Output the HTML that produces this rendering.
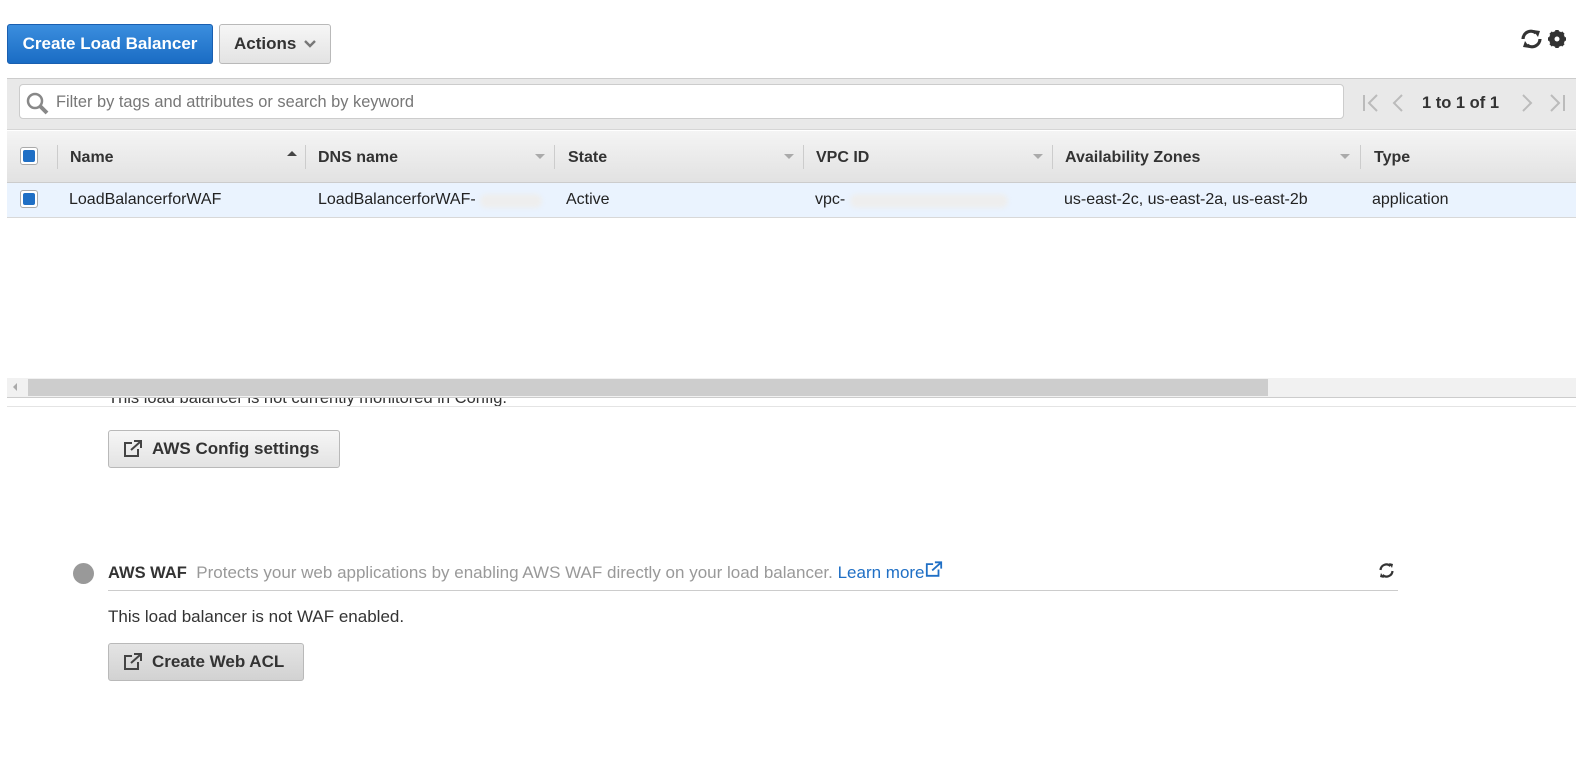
<!DOCTYPE html>
<html><head><style>
*{box-sizing:border-box;margin:0;padding:0}
body{width:1576px;height:764px;background:#fff;font-family:"Liberation Sans",Arial,sans-serif;font-size:15px;color:#222;position:relative;overflow:hidden}
.a{position:absolute}
.btn{position:absolute;border:1px solid #b9b9b9;border-radius:3px;background:linear-gradient(#f6f6f6,#e3e3e3);font-weight:bold;font-size:17px;color:#333;display:flex;align-items:center;padding-left:14px}
.hd{position:absolute;top:131px;height:53px;display:flex;align-items:center;font-weight:bold;font-size:16px;color:#333}
.sep{position:absolute;top:145px;width:1px;height:24px;background:#ccc}
.tri{position:absolute;top:154px;width:0;height:0;border-left:5px solid transparent;border-right:5px solid transparent;border-top:5px solid #aaa}
.cell{position:absolute;top:183px;height:34px;display:flex;align-items:center;font-size:16px;color:#222}
.cb{position:absolute;width:18px;height:18px;border:1px solid #aaa;border-radius:3px;background:#fff;padding:2px}
.cb i{display:block;width:12px;height:12px;background:#1f6fc5;border-radius:2px}
.blur{position:absolute;height:14px;background:#eee;border-radius:7px;filter:blur(2px)}
.pg{position:absolute;top:93px}
</style></head><body>
<div class="a" style="left:7px;top:24px;width:206px;height:40px;border:1px solid #1a5fb0;border-radius:3px;background:linear-gradient(#3b8ede,#1a6cc4);color:#fff;font-weight:bold;font-size:17px;display:flex;align-items:center;justify-content:center">Create Load Balancer</div>
<div class="btn" style="left:219px;top:24px;width:112px;height:40px">Actions <svg width="12" height="10" style="margin-left:8px" viewBox="0 0 12 10"><path d="M1 2l5 5 5-5" stroke="#777" stroke-width="2.4" fill="none"/></svg></div>
<svg class="a" style="left:1519px;top:28px" width="26" height="22" viewBox="0 0 26 22"><path d="M4 11a8 8 0 0 1 13-6" stroke="#333" stroke-width="3.2" fill="none"/><path d="M14 2l7 1-2 6z" fill="#333"/><path d="M21 11a8 8 0 0 1-13 6" stroke="#333" stroke-width="3.2" fill="none"/><path d="M11 20l-7-1 2-6z" fill="#333"/></svg>
<svg class="a" style="left:1547px;top:29px" width="20" height="20" viewBox="0 0 20 20"><circle cx="10" cy="10" r="6" fill="none" stroke="#333" stroke-width="4"/><g stroke="#333" stroke-width="3.5"><path d="M10 1v18M1 10h18M3.6 3.6l12.8 12.8M16.4 3.6L3.6 16.4"/></g><circle cx="10" cy="10" r="2.5" fill="#fff"/></svg>
<div class="a" style="left:7px;top:78px;width:1569px;height:52px;background:#e9e9e9;border-top:1px solid #ccc;border-bottom:1px solid #d6d6d6"></div>
<div class="a" style="left:19px;top:84px;width:1325px;height:35px;background:#fff;border:1px solid #ccc;border-radius:4px"></div>
<svg class="a" style="left:26px;top:92px" width="24" height="24" viewBox="0 0 24 24"><circle cx="9" cy="9" r="7" stroke="#888" stroke-width="2.5" fill="none"/><path d="M14 14l7 7" stroke="#888" stroke-width="4"/></svg>
<div class="a" style="left:56px;top:93px;font-size:16.4px;color:#777">Filter by tags and attributes or search by keyword</div>
<svg class="pg" style="left:1362px" width="18" height="20" viewBox="0 0 18 20"><path d="M2 2v16M15 2l-8 8 8 8" stroke="#bbb" stroke-width="2" fill="none"/></svg>
<svg class="pg" style="left:1392px" width="12" height="20" viewBox="0 0 12 20"><path d="M10 2l-8 8 8 8" stroke="#bbb" stroke-width="2" fill="none"/></svg>
<div class="a" style="left:1422px;top:94px;font-weight:bold;font-size:16.5px;color:#333">1 to 1 of 1</div>
<svg class="pg" style="left:1521px" width="12" height="20" viewBox="0 0 12 20"><path d="M2 2l8 8-8 8" stroke="#bbb" stroke-width="2" fill="none"/></svg>
<svg class="pg" style="left:1548px" width="18" height="20" viewBox="0 0 18 20"><path d="M16 2v16M3 2l8 8-8 8" stroke="#bbb" stroke-width="2" fill="none"/></svg>
<div class="a" style="left:7px;top:131px;width:1569px;height:52px;background:linear-gradient(#f4f4f4,#e2e2e2);border-bottom:1px solid #ccc"></div>
<div class="cb" style="left:20px;top:147px"><i></i></div>
<div class="sep" style="left:57px"></div><div class="hd" style="left:70px">Name</div>
<div class="a" style="left:287px;top:151px;border-left:5px solid transparent;border-right:5px solid transparent;border-bottom:5px solid #444"></div>
<div class="sep" style="left:305px"></div><div class="hd" style="left:318px">DNS name</div><div class="tri" style="left:535px"></div>
<div class="sep" style="left:554px"></div><div class="hd" style="left:568px">State</div><div class="tri" style="left:784px"></div>
<div class="sep" style="left:803px"></div><div class="hd" style="left:816px">VPC ID</div><div class="tri" style="left:1033px"></div>
<div class="sep" style="left:1052px"></div><div class="hd" style="left:1065px">Availability Zones</div><div class="tri" style="left:1340px"></div>
<div class="sep" style="left:1360px"></div><div class="hd" style="left:1374px">Type</div>
<div class="a" style="left:7px;top:183px;width:1569px;height:35px;background:#eaf3fe;border-bottom:1px solid #d8d8d8"></div>
<div class="cb" style="left:20px;top:190px"><i></i></div>
<div class="cell" style="left:69px">LoadBalancerforWAF</div>
<div class="cell" style="left:318px">LoadBalancerforWAF-</div><div class="blur" style="left:480px;top:194px;width:62px"></div>
<div class="cell" style="left:566px">Active</div>
<div class="cell" style="left:815px">vpc-</div><div class="blur" style="left:850px;top:194px;width:158px"></div>
<div class="cell" style="left:1064px">us-east-2c, us-east-2a, us-east-2b</div>
<div class="cell" style="left:1372px">application</div>
<div class="a" style="left:0;top:398px;width:1576px;height:16px;overflow:hidden"><div style="position:absolute;left:108px;top:-9px;font-size:16.5px;color:#333">This load balancer is not currently monitored in Config.</div></div>
<div class="a" style="left:7px;top:378px;width:1569px;height:19px;background:#f1f1f1"></div>
<div class="a" style="left:28px;top:379px;width:1240px;height:17px;background:#cdcdcd"></div>
<div class="a" style="left:13px;top:383px;border-top:4px solid transparent;border-bottom:4px solid transparent;border-right:4px solid #aaa"></div>
<div class="a" style="left:7px;top:397px;width:1569px;height:1px;background:#ccc"></div>
<div class="a" style="left:7px;top:406px;width:1569px;height:1px;background:#e4e4e4"></div>
<div class="btn" style="left:108px;top:430px;width:232px;height:38px"><svg width="20" height="18" viewBox="0 0 20 18" style="margin-right:9px"><path d="M9 3H2v13h13V9" stroke="#444" stroke-width="2" fill="none"/><path d="M8 10l9-8M11 1h7v7" stroke="#444" stroke-width="2" fill="none"/></svg>AWS Config settings</div>
<div class="a" style="left:73px;top:563px;width:21px;height:21px;border-radius:50%;background:#999"></div>
<div class="a" style="left:108px;top:561px;font-size:17px;color:#333;white-space:nowrap"><b style="font-size:16.5px">AWS WAF</b>&nbsp;&nbsp;<span style="color:#999">Protects your web applications by enabling AWS WAF directly on your load balancer.</span> <span style="color:#1f6fc5">Learn more</span><svg width="18" height="17" viewBox="0 0 20 18"><path d="M9 3H2v13h13V9" stroke="#1f6fc5" stroke-width="2" fill="none"/><path d="M8 10l9-8M11 1h7v7" stroke="#1f6fc5" stroke-width="2" fill="none"/></svg></div>
<svg class="a" style="left:1378px;top:562px" width="17" height="17" viewBox="0 0 17 17"><path d="M2.5 8a6 6 0 0 1 10-4" stroke="#333" stroke-width="2.2" fill="none"/><path d="M11 1l4 1-1 4z" fill="#333"/><path d="M14.5 9a6 6 0 0 1-10 4" stroke="#333" stroke-width="2.2" fill="none"/><path d="M6 16l-4-1 1-4z" fill="#333"/></svg>
<div class="a" style="left:108px;top:590px;width:1290px;height:1px;background:#ccc"></div>
<div class="a" style="left:108px;top:607px;font-size:17px;color:#333">This load balancer is not WAF enabled.</div>
<div class="btn" style="left:108px;top:643px;width:196px;height:38px;background:linear-gradient(#e4e4e4,#d2d2d2)"><svg width="20" height="18" viewBox="0 0 20 18" style="margin-right:9px"><path d="M9 3H2v13h13V9" stroke="#444" stroke-width="2" fill="none"/><path d="M8 10l9-8M11 1h7v7" stroke="#444" stroke-width="2" fill="none"/></svg>Create Web ACL</div>
</body></html>
